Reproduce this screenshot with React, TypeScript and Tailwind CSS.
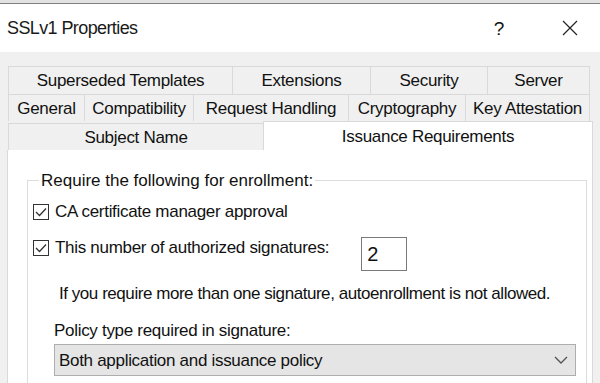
import React from "react";

const Tab = ({ label, w, last }: { label: string; w: number; last?: boolean }) => (
  <div
    className={`flex h-full items-center justify-center border-t border-l border-[#d9d9d9] ${last ? "border-r" : ""}`}
    style={{ width: w }}
  >
    {label}
  </div>
);

const Check = () => (
  <div className="flex h-[16px] w-[16px] shrink-0 items-center justify-center border border-[#333]">
    <svg width="12" height="10" viewBox="0 0 12 10">
      <path d="M1 5 L4.5 8.5 L11 1.5" fill="none" stroke="#333" strokeWidth="1.3" />
    </svg>
  </div>
);

export default function App() {
  return (
    <div
      className="relative h-[383px] w-[600px] overflow-hidden bg-[#f0f0f0] text-[17px] leading-none tracking-[-0.3px] text-[#111]"
      style={{ fontFamily: '"Liberation Sans", Arial, sans-serif' }}
    >
      <div className="h-[3px] bg-[#e2e2e2]" />
      <div className="h-[1px] bg-[#808080]" />
      <div className="flex h-[48px] items-center bg-white pl-[7px] pr-[22px]">
        <span className="text-[18px] tracking-[-0.6px] text-[#1a1a1a]">SSLv1 Properties</span>
        <span className="ml-auto mr-[58px] text-[19px]">?</span>
        <svg width="16" height="16" viewBox="0 0 16 16">
          <path d="M1 1 L15 15 M15 1 L1 15" stroke="#222" strokeWidth="1.2" />
        </svg>
      </div>
      <div className="h-[14px]" />
      <div className="ml-[8px] flex h-[28px] w-[582px]">
        <Tab label="Superseded Templates" w={224} />
        <Tab label="Extensions" w={138} />
        <Tab label="Security" w={117} />
        <Tab label="Server" w={103} last />
      </div>
      <div className="ml-[8px] flex h-[27px] w-[582px]">
        <Tab label="General" w={76} />
        <Tab label="Compatibility" w={109} />
        <Tab label="Request Handling" w={155} />
        <Tab label="Cryptography" w={117} />
        <Tab label="Key Attestation" w={125} last />
      </div>
      <div className="flex h-[29px] items-end">
        <div className="ml-[8px] flex h-[27px] w-[255px] items-center justify-center border-t border-l border-[#d9d9d9]">
          Subject Name
        </div>
        <div className="flex h-[29px] w-[330px] items-center justify-center border-t border-r border-l border-[#d9d9d9] bg-white">
          Issuance Requirements
        </div>
      </div>
      <div className="ml-[7px] h-[250px] w-[586px] border-r border-l border-[#d9d9d9] bg-white pt-[22px] pl-[19px] pr-[5px]">
        <fieldset className="h-[300px] border border-[#dcdcdc] pl-[5px] pr-[10px]">
          <legend className="ml-[6px] px-[2px] leading-[17px] tracking-[0px]">Require the following for enrollment:</legend>
          <div className="mt-[14px] flex items-center gap-[6px]">
            <Check />
            <span>CA certificate manager approval</span>
          </div>
          <div className="mt-[17px] flex items-start">
            <div className="mt-[2px] flex items-center gap-[6px]">
              <Check />
              <span className="leading-[17px]">This number of authorized signatures:</span>
            </div>
            <div className="ml-[32px] flex h-[34px] w-[46px] items-center border border-[#7a7a7a] pl-[5px] text-[20px]">
              2
            </div>
          </div>
          <div className="mt-[14px] pl-[26px] leading-[17px] tracking-[-0.45px]">
            If you require more than one signature, autoenrollment is not allowed.
          </div>
          <div className="mt-[20px] pl-[21px] leading-[17px]">Policy type required in signature:</div>
          <div className="mt-[5px] ml-[21px] flex h-[32px] w-[522px] items-center border border-[#adadad] bg-[#e5e5e5] pl-[4px] pr-[7px]">
            <span>Both application and issuance policy</span>
            <svg className="ml-auto" width="14" height="8" viewBox="0 0 14 8">
              <path d="M1 1 L7 7 L13 1" fill="none" stroke="#555" strokeWidth="1.4" />
            </svg>
          </div>
        </fieldset>
      </div>
    </div>
  );
}
